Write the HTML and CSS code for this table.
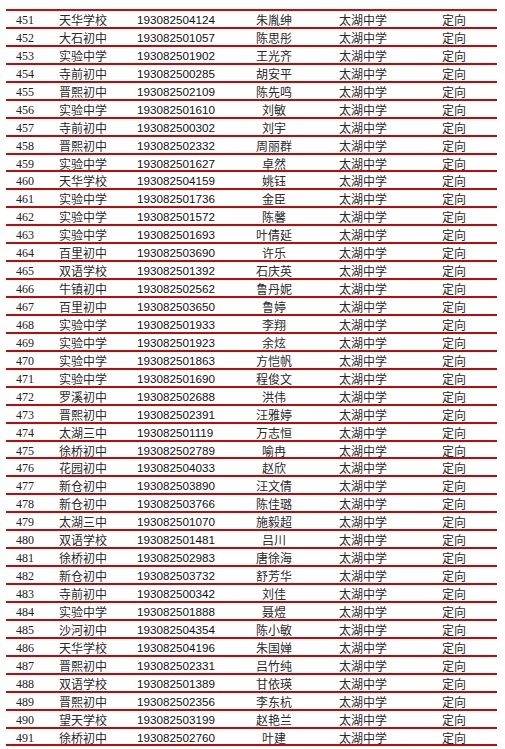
FILE: index.html
```html
<!DOCTYPE html>
<html lang="zh-CN">
<head>
<meta charset="utf-8">
<title>名单</title>
<link rel="stylesheet" href="styles.css">
</head>
<body>
<div class="page">
<table class="list">
<colgroup>
<col class="c-no"><col class="c-school"><col class="c-id"><col class="c-name"><col class="c-target"><col class="c-type">
</colgroup>
<tbody>
<tr><td class="no">451</td><td class="cn">天华学校</td><td class="id">193082504124</td><td class="name">朱胤绅</td><td class="cn tgt">太湖中学</td><td class="cn typ">定向</td></tr>
<tr><td class="no">452</td><td class="cn">大石初中</td><td class="id">193082501057</td><td class="name">陈思彤</td><td class="cn tgt">太湖中学</td><td class="cn typ">定向</td></tr>
<tr><td class="no">453</td><td class="cn">实验中学</td><td class="id">193082501902</td><td class="name">王光齐</td><td class="cn tgt">太湖中学</td><td class="cn typ">定向</td></tr>
<tr><td class="no">454</td><td class="cn">寺前初中</td><td class="id">193082500285</td><td class="name">胡安平</td><td class="cn tgt">太湖中学</td><td class="cn typ">定向</td></tr>
<tr><td class="no">455</td><td class="cn">晋熙初中</td><td class="id">193082502109</td><td class="name">陈先鸣</td><td class="cn tgt">太湖中学</td><td class="cn typ">定向</td></tr>
<tr><td class="no">456</td><td class="cn">实验中学</td><td class="id">193082501610</td><td class="name">刘敏</td><td class="cn tgt">太湖中学</td><td class="cn typ">定向</td></tr>
<tr><td class="no">457</td><td class="cn">寺前初中</td><td class="id">193082500302</td><td class="name">刘宇</td><td class="cn tgt">太湖中学</td><td class="cn typ">定向</td></tr>
<tr><td class="no">458</td><td class="cn">晋熙初中</td><td class="id">193082502332</td><td class="name">周丽群</td><td class="cn tgt">太湖中学</td><td class="cn typ">定向</td></tr>
<tr><td class="no">459</td><td class="cn">实验中学</td><td class="id">193082501627</td><td class="name">卓然</td><td class="cn tgt">太湖中学</td><td class="cn typ">定向</td></tr>
<tr><td class="no">460</td><td class="cn">天华学校</td><td class="id">193082504159</td><td class="name">姚钰</td><td class="cn tgt">太湖中学</td><td class="cn typ">定向</td></tr>
<tr><td class="no">461</td><td class="cn">实验中学</td><td class="id">193082501736</td><td class="name">金臣</td><td class="cn tgt">太湖中学</td><td class="cn typ">定向</td></tr>
<tr><td class="no">462</td><td class="cn">实验中学</td><td class="id">193082501572</td><td class="name">陈馨</td><td class="cn tgt">太湖中学</td><td class="cn typ">定向</td></tr>
<tr><td class="no">463</td><td class="cn">实验中学</td><td class="id">193082501693</td><td class="name">叶倩延</td><td class="cn tgt">太湖中学</td><td class="cn typ">定向</td></tr>
<tr><td class="no">464</td><td class="cn">百里初中</td><td class="id">193082503690</td><td class="name">许乐</td><td class="cn tgt">太湖中学</td><td class="cn typ">定向</td></tr>
<tr><td class="no">465</td><td class="cn">双语学校</td><td class="id">193082501392</td><td class="name">石庆英</td><td class="cn tgt">太湖中学</td><td class="cn typ">定向</td></tr>
<tr><td class="no">466</td><td class="cn">牛镇初中</td><td class="id">193082502562</td><td class="name">鲁丹妮</td><td class="cn tgt">太湖中学</td><td class="cn typ">定向</td></tr>
<tr><td class="no">467</td><td class="cn">百里初中</td><td class="id">193082503650</td><td class="name">鲁婷</td><td class="cn tgt">太湖中学</td><td class="cn typ">定向</td></tr>
<tr><td class="no">468</td><td class="cn">实验中学</td><td class="id">193082501933</td><td class="name">李翔</td><td class="cn tgt">太湖中学</td><td class="cn typ">定向</td></tr>
<tr><td class="no">469</td><td class="cn">实验中学</td><td class="id">193082501923</td><td class="name">余炫</td><td class="cn tgt">太湖中学</td><td class="cn typ">定向</td></tr>
<tr><td class="no">470</td><td class="cn">实验中学</td><td class="id">193082501863</td><td class="name">方恺帆</td><td class="cn tgt">太湖中学</td><td class="cn typ">定向</td></tr>
<tr><td class="no">471</td><td class="cn">实验中学</td><td class="id">193082501690</td><td class="name">程俊文</td><td class="cn tgt">太湖中学</td><td class="cn typ">定向</td></tr>
<tr><td class="no">472</td><td class="cn">罗溪初中</td><td class="id">193082502688</td><td class="name">洪伟</td><td class="cn tgt">太湖中学</td><td class="cn typ">定向</td></tr>
<tr><td class="no">473</td><td class="cn">晋熙初中</td><td class="id">193082502391</td><td class="name">汪雅婷</td><td class="cn tgt">太湖中学</td><td class="cn typ">定向</td></tr>
<tr><td class="no">474</td><td class="cn">太湖三中</td><td class="id">193082501119</td><td class="name">万志恒</td><td class="cn tgt">太湖中学</td><td class="cn typ">定向</td></tr>
<tr><td class="no">475</td><td class="cn">徐桥初中</td><td class="id">193082502789</td><td class="name">喻冉</td><td class="cn tgt">太湖中学</td><td class="cn typ">定向</td></tr>
<tr><td class="no">476</td><td class="cn">花园初中</td><td class="id">193082504033</td><td class="name">赵欣</td><td class="cn tgt">太湖中学</td><td class="cn typ">定向</td></tr>
<tr><td class="no">477</td><td class="cn">新仓初中</td><td class="id">193082503890</td><td class="name">汪文倩</td><td class="cn tgt">太湖中学</td><td class="cn typ">定向</td></tr>
<tr><td class="no">478</td><td class="cn">新仓初中</td><td class="id">193082503766</td><td class="name">陈佳璐</td><td class="cn tgt">太湖中学</td><td class="cn typ">定向</td></tr>
<tr><td class="no">479</td><td class="cn">太湖三中</td><td class="id">193082501070</td><td class="name">施毅超</td><td class="cn tgt">太湖中学</td><td class="cn typ">定向</td></tr>
<tr><td class="no">480</td><td class="cn">双语学校</td><td class="id">193082501481</td><td class="name">吕川</td><td class="cn tgt">太湖中学</td><td class="cn typ">定向</td></tr>
<tr><td class="no">481</td><td class="cn">徐桥初中</td><td class="id">193082502983</td><td class="name">唐徐海</td><td class="cn tgt">太湖中学</td><td class="cn typ">定向</td></tr>
<tr><td class="no">482</td><td class="cn">新仓初中</td><td class="id">193082503732</td><td class="name">舒芳华</td><td class="cn tgt">太湖中学</td><td class="cn typ">定向</td></tr>
<tr><td class="no">483</td><td class="cn">寺前初中</td><td class="id">193082500342</td><td class="name">刘佳</td><td class="cn tgt">太湖中学</td><td class="cn typ">定向</td></tr>
<tr><td class="no">484</td><td class="cn">实验中学</td><td class="id">193082501888</td><td class="name">聂煜</td><td class="cn tgt">太湖中学</td><td class="cn typ">定向</td></tr>
<tr><td class="no">485</td><td class="cn">沙河初中</td><td class="id">193082504354</td><td class="name">陈小敏</td><td class="cn tgt">太湖中学</td><td class="cn typ">定向</td></tr>
<tr><td class="no">486</td><td class="cn">天华学校</td><td class="id">193082504196</td><td class="name">朱国婵</td><td class="cn tgt">太湖中学</td><td class="cn typ">定向</td></tr>
<tr><td class="no">487</td><td class="cn">晋熙初中</td><td class="id">193082502331</td><td class="name">吕竹纯</td><td class="cn tgt">太湖中学</td><td class="cn typ">定向</td></tr>
<tr><td class="no">488</td><td class="cn">双语学校</td><td class="id">193082501389</td><td class="name">甘依瑛</td><td class="cn tgt">太湖中学</td><td class="cn typ">定向</td></tr>
<tr><td class="no">489</td><td class="cn">晋熙初中</td><td class="id">193082502356</td><td class="name">李东杭</td><td class="cn tgt">太湖中学</td><td class="cn typ">定向</td></tr>
<tr><td class="no">490</td><td class="cn">望天学校</td><td class="id">193082503199</td><td class="name">赵艳兰</td><td class="cn tgt">太湖中学</td><td class="cn typ">定向</td></tr>
<tr><td class="no">491</td><td class="cn">徐桥初中</td><td class="id">193082502760</td><td class="name">叶建</td><td class="cn tgt">太湖中学</td><td class="cn typ">定向</td></tr>
</tbody>
</table>
</div>
</body>
</html>
```

FILE: styles.css
```css
html, body {
  margin: 0;
  padding: 0;
  background: #ffffff;
}

.page {
  padding: 9px 8px 0 6px;
}

.list {
  width: 491px;
  border-collapse: collapse;
  table-layout: fixed;
  border-top: 2px solid #cc0a0a;
  color: #222;
}

.c-no { width: 53px; }
.c-school { width: 78px; }
.c-id { width: 103px; }
.c-name { width: 68px; }
.c-target { width: 112px; }
.c-type { width: 77px; }

.list tr {
  height: 15.93px;
  border-bottom: 2px solid #c00a0a;
}

.list td {
  padding: 3px 0 0 0;
  line-height: 12.93px;
  font-size: 12px;
  white-space: nowrap;
  overflow: hidden;
  vertical-align: top;
}

.list td.no {
  font-family: "Liberation Serif", serif;
  padding-left: 10px;
}

.list td.cn,
.list td.name {
  font-family: "Noto Sans CJK SC", sans-serif;
  color: #2a2a2a;
}

.list td.id {
  font-family: "Liberation Sans", sans-serif;
  font-size: 11.7px;
  color: #111;
}

.list td.name {
  text-align: center;
}

.list td.tgt {
  padding-left: 31px;
}

.list td.typ {
  padding-left: 22px;
}
```
